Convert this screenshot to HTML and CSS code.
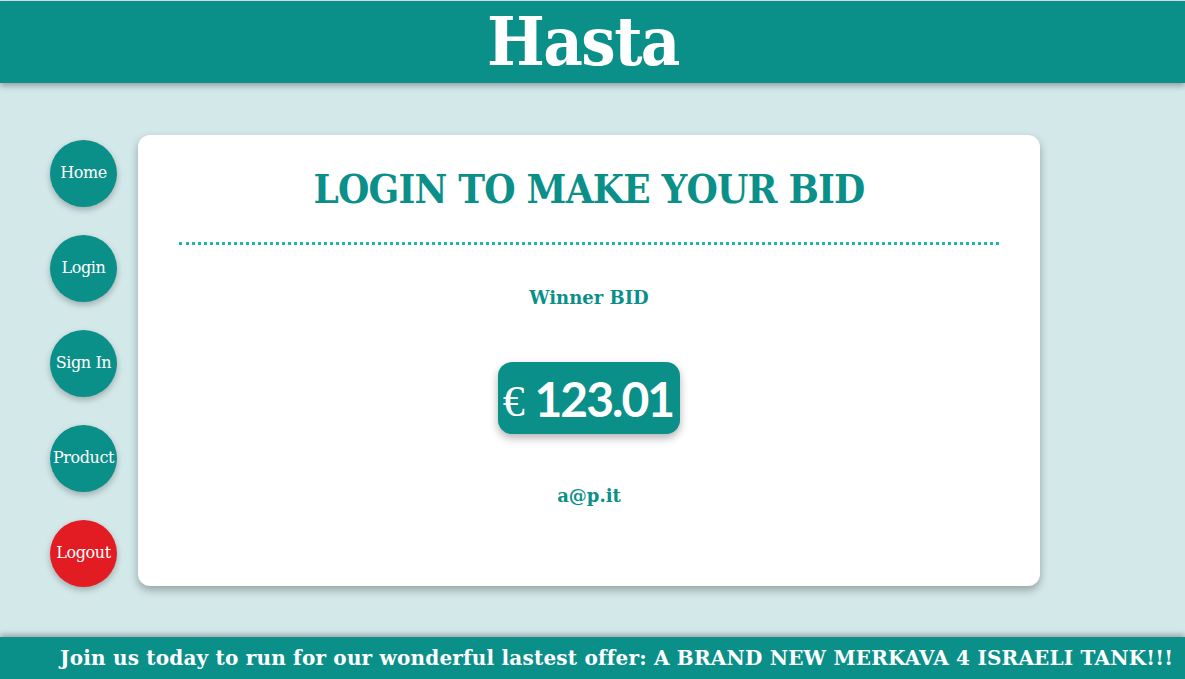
FILE: index.html
```html
<!DOCTYPE html>
<html lang="en">
<head>
<meta charset="utf-8">
<title>Hasta</title>
<link rel="stylesheet" href="styles.css">
</head>
<body>
<header class="top-bar">
  <h1 class="brand">Hasta</h1>
</header>
<main class="layout">
  <nav class="side-nav">
    <a class="nav-btn" href="#">Home</a>
    <a class="nav-btn" href="#">Login</a>
    <a class="nav-btn" href="#">Sign In</a>
    <a class="nav-btn" href="#">Product</a>
    <a class="nav-btn nav-btn--danger" href="#">Logout</a>
  </nav>
  <section class="card">
    <h2 class="card-title">LOGIN TO MAKE YOUR BID</h2>
    <hr class="divider">
    <p class="label">Winner BID</p>
    <div class="price"><span class="currency">€</span> 123.01</div>
    <p class="label user">a@p.it</p>
  </section>
</main>
<footer class="bottom-bar">
  <p class="promo">Join us today to run for our wonderful lastest offer: A BRAND NEW MERKAVA 4 ISRAELI TANK!!!</p>
</footer>
</body>
</html>
```
FILE: styles.css
```css
* { box-sizing: border-box; }
html, body { margin: 0; padding: 0; }
body {
  width: 1185px;
  height: 679px;
  overflow: hidden;
  background: #d3e8e9;
  font-family: "DejaVu Serif", serif;
  display: flex;
  flex-direction: column;
}
.top-bar {
  height: 82px;
  margin-top: 1px;
  background: #0a8f89;
  box-shadow: 0 3px 6px rgba(0,0,0,0.3);
  display: flex;
  justify-content: center;
  align-items: flex-start;
  padding-right: 19px;
  position: relative;
  z-index: 1;
}
.brand {
  margin: 0;
  color: #fff;
  font-family: "DejaVu Serif Condensed", "DejaVu Serif", serif;
  font-size: 68px;
  font-weight: bold;
  line-height: normal;
  letter-spacing: -1.6px;
}
.layout {
  flex: 1;
  display: flex;
  align-items: flex-start;
  padding: 52px 0 0 50px;
  gap: 21px;
}
.side-nav {
  display: flex;
  flex-direction: column;
  gap: 28px;
  padding-top: 5px;
}
.nav-btn {
  width: 67px;
  height: 67px;
  border-radius: 50%;
  background: #0a8f89;
  color: #fff;
  text-decoration: none;
  display: flex;
  align-items: center;
  justify-content: center;
  font-size: 16px;
  letter-spacing: -0.4px;
  padding-bottom: 2px;
  box-shadow: 0 3px 6px rgba(0,0,0,0.25);
  white-space: nowrap;
}
.nav-btn--danger { background: #e31b23; }
.card {
  width: 902px;
  height: 451px;
  background: #fff;
  border-radius: 12px;
  box-shadow: 0 4px 8px rgba(0,0,0,0.3);
  display: flex;
  flex-direction: column;
  align-items: center;
  padding: 32px 41px 0;
}
.card-title {
  margin: 0;
  color: #0a8f89;
  font-family: "DejaVu Serif Condensed", "DejaVu Serif", serif;
  font-size: 40px;
  font-weight: bold;
  line-height: 44px;
  letter-spacing: -0.8px;
}
.divider {
  width: 820px;
  margin: 31px 0 0;
  border: 0;
  border-top: 3px dotted #1ab6b0;
}
.label {
  margin: 41px 0 0;
  color: #0a8f89;
  font-size: 18px;
  font-weight: bold;
  line-height: 24px;
}
.price {
  margin-top: 52px;
  height: 72px;
  padding: 0 7px 0 5px;
  border-radius: 14px;
  background: #0a8f89;
  color: #fff;
  box-shadow: 0 4px 8px rgba(0,0,0,0.3);
  display: flex;
  align-items: center;
  font-family: "Lato", sans-serif;
  font-weight: bold;
  font-size: 48px;
  letter-spacing: -2px;
  white-space: pre;
}
.currency {
  font-family: "Liberation Serif", serif;
  font-weight: normal;
  font-size: 44px;
  margin-top: 6px;
  letter-spacing: 0;
}
.user { margin-top: 50px; }
.bottom-bar {
  height: 42px;
  background: #0a8f89;
  box-shadow: 0 -3px 5px rgba(0,0,0,0.25);
  display: flex;
  align-items: center;
  padding-left: 60px;
}
.promo {
  margin: 0;
  color: #fff;
  font-size: 20px;
  font-weight: bold;
  white-space: nowrap;
  letter-spacing: 0.2px;
}
```
